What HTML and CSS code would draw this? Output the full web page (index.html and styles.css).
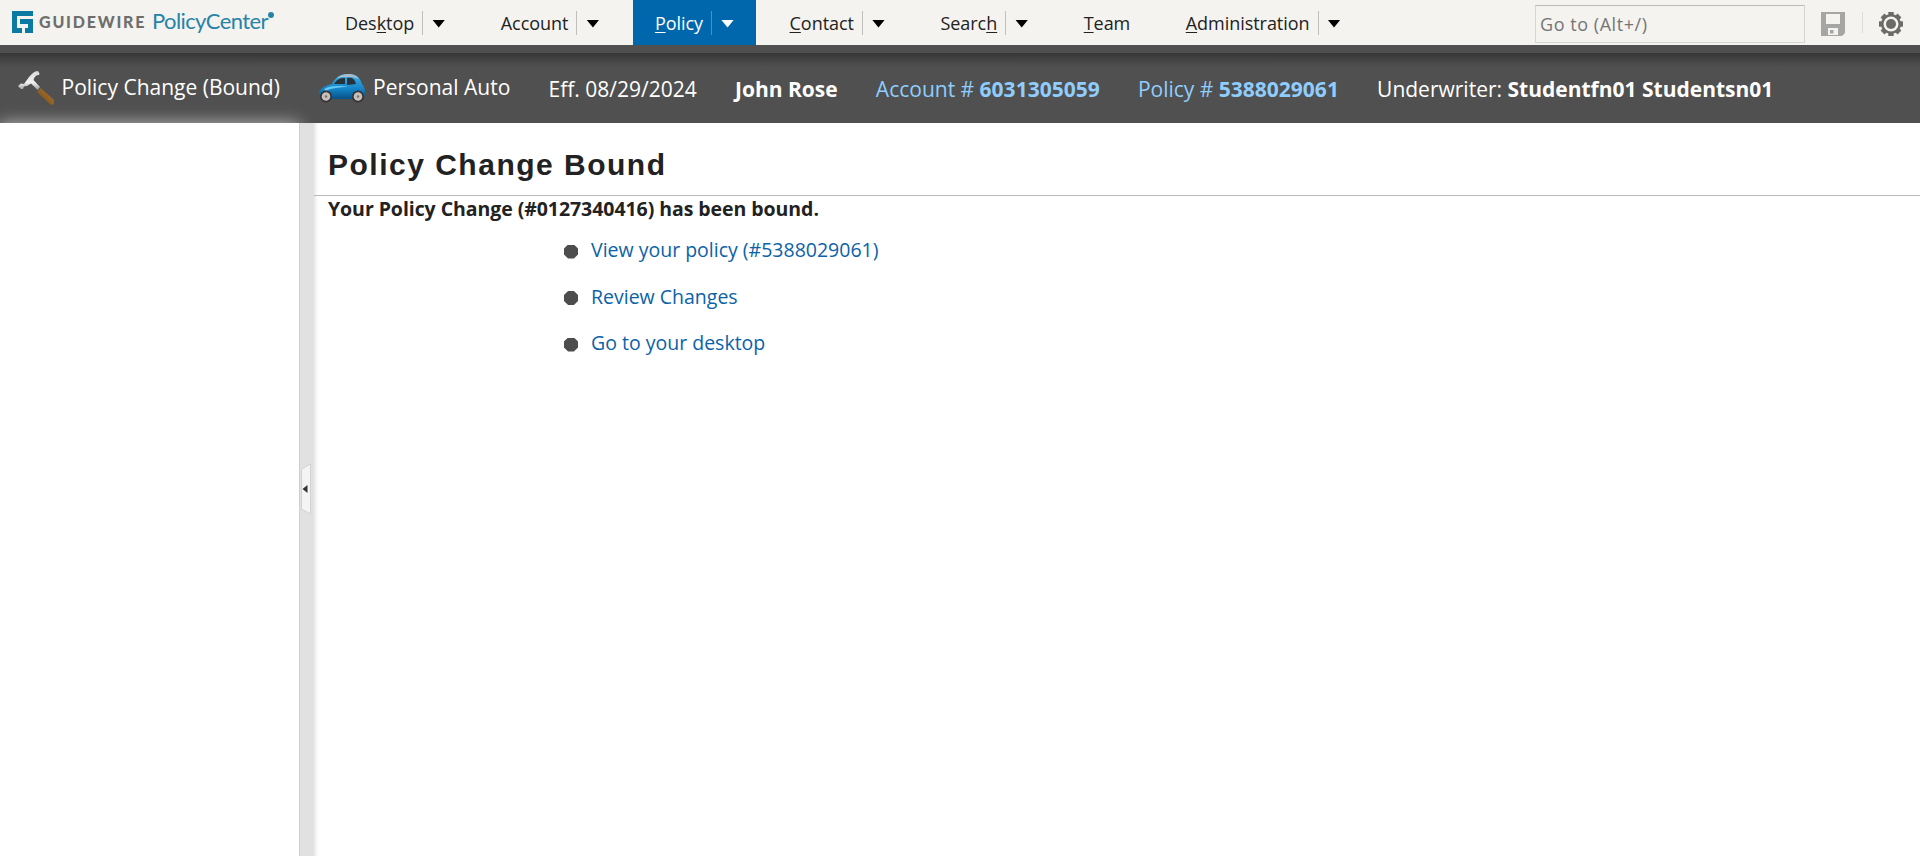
FILE: index.html
```
<!DOCTYPE html>
<html lang="en">
<head>
<meta charset="utf-8">
<title>Policy Change Bound</title>
<link rel="stylesheet" href="styles.css">
</head>
<body>
<header class="topbar">
  <div class="brand">
    <svg class="brand-mark" width="21" height="22" viewBox="0 0 21 22"><path fill="#0a7aa3" d="M0 0H21V5H5V17H10V22H0ZM8 8H21V22H13V17H16V13H8Z"/></svg>
    <span class="brand-company">GUIDEWIRE</span>
    <span class="brand-product">PolicyCenter</span>
    <span class="brand-dot"></span>
  </div>
  <nav class="tabs">
    <a class="tab"><span class="label">Des<u>k</u>top</span><i class="sep"></i><i class="arrow"></i></a>
    <a class="tab"><span class="label">Account</span><i class="sep"></i><i class="arrow"></i></a>
    <a class="tab active"><span class="label"><u>P</u>olicy</span><i class="sep"></i><i class="arrow"></i></a>
    <a class="tab"><span class="label"><u>C</u>ontact</span><i class="sep"></i><i class="arrow"></i></a>
    <a class="tab"><span class="label">Searc<u>h</u></span><i class="sep"></i><i class="arrow"></i></a>
    <a class="tab"><span class="label"><u>T</u>eam</span></a>
    <a class="tab"><span class="label"><u>A</u>dministration</span><i class="sep"></i><i class="arrow"></i></a>
  </nav>
  <div class="tools">
    <input class="goto" type="text" placeholder="Go to (Alt+/)">
    <svg class="save" width="24" height="24" viewBox="0 0 24 24"><path fill="#a6a6a4" d="M0 0H24V21L21 24H0Z"/><path fill="#f4f3ef" d="M5 2H19V12H5ZM7 16H17V23H7Z"/><path fill="#a6a6a4" d="M9 18H12.500V21.500H9Z"/></svg>
    <i class="tool-sep"></i>
    <svg class="gear" width="24" height="24" viewBox="-12 -12 24 24"><g fill="#6b6b69"><circle r="10"/><g id="teeth"><rect x="-2.700" y="-12" width="5.400" height="24"/><rect x="-12" y="-2.700" width="24" height="5.400"/></g><use href="#teeth" transform="rotate(45)"/></g><circle r="7.500" fill="#f4f3ef"/><circle r="5" fill="#6b6b69"/></svg>
  </div>
</header>
<section class="infobar">
  <div class="info job">
    <svg class="hammer" width="36" height="34" viewBox="0 0 36 34">
      <defs><linearGradient id="steel" x1="0" y1="0" x2="0" y2="1"><stop offset="0" stop-color="#d5d5d5"/><stop offset=".6" stop-color="#f3f3f3"/><stop offset="1" stop-color="#999"/></linearGradient>
      <linearGradient id="wood" x1="1" y1="0" x2="0" y2="1"><stop offset="0" stop-color="#b47c2e"/><stop offset="1" stop-color="#704517"/></linearGradient></defs>
      <path fill="url(#wood)" d="M22.500 17L36 29V33L33 34L19 21Z"/>
      <path fill="url(#steel)" d="M0 15L3 12.500L6 13L11 6C14 3 16 0 20 0L21.500 2.500L21 4C18 4 16 6 15.500 9L22 16L19.500 19L13 12.500L9 15L6 15.500L5 18L3 18Z"/>
    </svg>
    <span>Policy Change (Bound)</span>
  </div>
  <div class="info line">
    <svg class="car" width="48" height="29" viewBox="0 0 48 29">
      <defs><linearGradient id="paint" x1="0" y1="0" x2="0" y2="1"><stop offset="0" stop-color="#39b4ea"/><stop offset=".6" stop-color="#1483c6"/><stop offset="1" stop-color="#075187"/></linearGradient></defs>
      <path fill="url(#paint)" d="M1 20C1 15 6 12 14 10C18 3 22 0 31 0C39 0 42 4 44 10C47 13 48 19 46 23L42 25H7L1 23Z"/>
      <path fill="#a9bac8" d="M19 4C24 -1 37 -2 41 5L34 3H25Z"/>
      <path fill="#26323c" d="M16 10C19 5 22 4 27 4V10ZM29 4C35 3 37 6 38 10L29 11Z"/>
      <path fill="#66c9f4" d="M6 15C14 11 25 12 30 13C22 13 13 14 8 17Z"/>
      <circle cx="8" cy="22.500" r="6" fill="#333"/><circle cx="8" cy="22.500" r="4.300" fill="#c9bfbc"/><circle cx="8" cy="22.500" r="1.300" fill="#776"/>
      <circle cx="40" cy="22.500" r="6" fill="#333"/><circle cx="40" cy="22.500" r="4.300" fill="#c9bfbc"/><circle cx="40" cy="22.500" r="1.300" fill="#776"/>
    </svg>
    <span>Personal Auto</span>
  </div>
  <div class="info">Eff. 08/29/2024</div>
  <div class="info"><b>John Rose</b></div>
  <a class="info link">Account # <b>6031305059</b></a>
  <a class="info link">Policy # <b>5388029061</b></a>
  <div class="info">Underwriter: <b>Studentfn01 Studentsn01</b></div>
</section>
<div class="workspace">
  <aside class="sidebar"></aside>
  <div class="splitter">
    <svg width="12" height="52" viewBox="0 0 12 52"><path fill="#f4f4f4" stroke="#d2d2d2" d="M1.500 6L10.500 1V51L1.500 46Z"/><path fill="#333" d="M2.500 26L7.500 22V30Z"/></svg>
  </div>
  <main class="content">
    <h1 class="title">Policy Change Bound</h1>
    <p class="message">Your Policy Change (#0127340416) has been bound.</p>
    <ul class="actions">
      <li><i class="bullet"></i><a>View your policy (#5388029061)</a></li>
      <li><i class="bullet"></i><a>Review Changes</a></li>
      <li><i class="bullet"></i><a>Go to your desktop</a></li>
    </ul>
  </main>
</div>
</body>
</html>
```
FILE: styles.css
```
* { box-sizing: border-box; }
body { margin: 0; height: 856px; overflow: hidden; background: #fff; color: #222; font-family: "Open Sans", sans-serif; font-size: 19.5px; display: flex; flex-direction: column; }
.topbar { height: 45px; flex: none; background: #f4f3ef; display: flex; }
.brand { width: 323px; padding: 11px 0 0 12px; display: flex; align-items: flex-start; flex: none; }
.brand-company { font: 900 16px/22px Lato, sans-serif; letter-spacing: 1.8px; color: #6e6e6c; margin-left: 6px; width: 113px; }
.brand-product { font: 22px/22px Lato, sans-serif; letter-spacing: -.6px; color: #2783a8; width: 116px; margin-top: -1px; }
.brand-dot { width: 6px; height: 6px; border-radius: 50%; background: #2783a8; margin-top: 1px; }
.tabs { display: flex; gap: 12px; }
.tab { display: flex; align-items: center; padding: 0 21.5px 0 22px; font-size: 18px; line-height: 24px; color: #222; white-space: nowrap; }
.tab u { text-underline-offset: 2px; text-decoration-thickness: 1px; }
.label { letter-spacing: -.04px; }
.sep { width: 1px; height: 24px; background: #bfbfbc; margin: 1px 9px 0 8px; }
.arrow { width: 13px; height: 8px; background: #000; clip-path: polygon(0 0, 100% 0, 50% 100%); margin-top: 2px; }
.active { background: #0067ac; color: #fff; }
.active .sep { background: #4d8fbd; }
.active .arrow { background: #fff; }
.tools { margin-left: auto; display: flex; align-items: flex-start; padding-right: 17px; }
.goto { width: 270px; height: 38px; margin-top: 5px; border: 1px solid #d5d5d3; border-top-color: #bbb; background: transparent; padding: 0 4px; font: 18px "Open Sans", sans-serif; letter-spacing: .55px; }
.goto::placeholder { color: #757575; }
.save { margin: 12px 17px 0 16px; }
.tool-sep { width: 1px; height: 21px; background: #ddd; margin: 12px 16px 0 0; }
.gear { margin-top: 12px; }
.infobar { height: 78px; flex: none; border-top: 8px solid #505050; background: linear-gradient(#373737, #505050 14px); color: #fff; display: flex; align-items: flex-start; padding: 22px 0 0 18px; }
.info { white-space: nowrap; font-size: 21px; line-height: 28px; margin-right: 38.2px; }
.job, .line { display: flex; margin-top: -2px; }
.hammer { margin: -2px 7.5px 0 0; }
.car { margin: 1px 7px 0 0; }
.link { color: #8fcdff; }
.workspace { flex: 1; display: flex; }
.sidebar { width: 299px; background: #fff; box-shadow: 0 0 15px #bbb; }
.splitter { width: 15px; background: #e1e1e1; border-left: 1px solid #cfcfcf; display: flex; align-items: center; padding-bottom: 2px; z-index: 1; }
.content { flex: 1; box-shadow: inset 5px 0 5px -4px #ddd; }
.title { margin: 0; height: 73px; border-bottom: 1px solid #bbb; padding: 23px 0 0 14px; font: bold 30px/38px "Liberation Sans", Arial, sans-serif; letter-spacing: 1.5px; }
.message { margin: 0; padding-left: 14px; font-size: 19.5px; line-height: 26px; font-weight: bold; letter-spacing: -.06px; }
.actions { list-style: none; margin: 14px 0 0 250px; padding: 0; display: flex; flex-direction: column; gap: 18.5px; }
.actions li { display: flex; align-items: center; gap: 13px; height: 28px; line-height: 28px; color: #0b62a8; }
.bullet { width: 14px; height: 14px; background: #4d4d4d; clip-path: polygon(29% 0, 71% 0, 100% 29%, 100% 71%, 71% 100%, 29% 100%, 0 71%, 0 29%); margin-top: 3px; }
```
